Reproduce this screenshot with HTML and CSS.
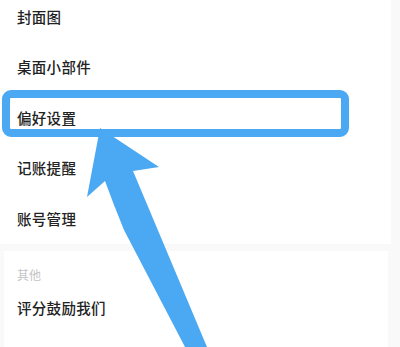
FILE: index.html
```html
<!DOCTYPE html>
<html lang="zh">
<head>
<meta charset="utf-8">
<link rel="stylesheet" href="styles.css">
</head>
<body>
<div class="page">
  <div class="card card-top">
    <div class="row">封面图</div>
    <div class="row">桌面小部件</div>
    <div class="row">偏好设置</div>
    <div class="row">记账提醒</div>
    <div class="row">账号管理</div>
  </div>
  <div class="card card-other">
    <div class="section-title">其他</div>
    <div class="row">评分鼓励我们</div>
  </div>
  <div class="highlight"></div>
  <svg class="arrow" width="400" height="347" viewBox="0 0 400 347">
    <polygon fill="#4aa9f2" points="100,128 159,167 133,171 207,347 213,360 192,360 185,347 124,230 114,205 105,181 87,197"/>
  </svg>
</div>
</body>
</html>
```

FILE: styles.css
```css
html, body {
  margin: 0;
  padding: 0;
}
body {
  background: #f9f9f9;
  width: 400px;
  height: 347px;
  overflow: hidden;
  font-family: "Noto Sans CJK SC", "Noto Sans", sans-serif;
}
.page {
  position: relative;
  width: 400px;
  height: 347px;
  overflow: hidden;
}
.card {
  background: #ffffff;
}
.card-top {
  width: 391px;
  margin-top: -9px;
  padding-left: 17px;
  box-sizing: border-box;
}
.card-other {
  width: 384px;
  margin-left: 4px;
  margin-top: 7px;
  padding-left: 13px;
  box-sizing: border-box;
  height: 120px;
}
.row {
  height: 50.5px;
  display: flex;
  align-items: center;
  font-size: 14.5px;
  font-weight: 500;
  color: #222222;
  letter-spacing: 0.3px;
}
.section-title {
  padding-top: 16px;
  height: 16px;
  line-height: 16px;
  font-size: 12px;
  color: #c4c4c4;
}
.card-other .row {
  height: 50px;
}
.highlight {
  position: absolute;
  left: 2px;
  top: 90px;
  width: 347px;
  height: 47px;
  box-sizing: border-box;
  border: 8px solid #4aa9f2;
  border-radius: 9px;
}
.arrow {
  position: absolute;
  left: 0;
  top: 0;
}
```
